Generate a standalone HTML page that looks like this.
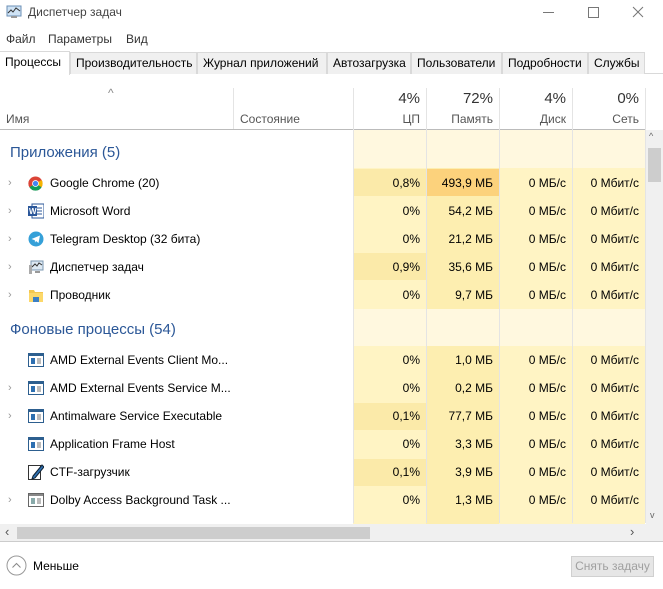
<!DOCTYPE html>
<html><head><meta charset="utf-8"><style>
*{margin:0;padding:0;box-sizing:border-box}
body{width:663px;height:589px;background:#fff;font-family:"Liberation Sans",sans-serif;font-size:12px;color:#000;position:relative;overflow:hidden}
.a{position:absolute;white-space:nowrap}
.tab{position:absolute;top:52px;height:22px;border:1px solid #d9d9d9;border-bottom:none;background:#f0f0f0;font-size:12px;line-height:20px;padding-left:5px}
.c{position:absolute;text-align:right;padding-right:6px;line-height:28px;height:28px}
.vl{position:absolute;top:88px;width:1px;height:435px;background:#e4e4e4}
.g{position:absolute;color:#2b5797;font-size:15px}
.ch{position:absolute;left:8px;color:#999;font-size:11px}
</style></head><body>
<svg class="a" style="left:6px;top:5px" width="16" height="14" viewBox="0 0 16 14"><rect x="1" y="1" width="14" height="10" fill="#cfe3f5" stroke="#6b8fb5"/><polyline points="2,8 5,5 7,7 10,3 14,6" fill="none" stroke="#333" stroke-width="1"/><rect x="5" y="11" width="6" height="2" fill="#999"/></svg>
<div class="a" style="left:28px;top:5px;color:#444;font-size:12px">Диспетчер задач</div>
<div class="a" style="left:543px;top:12px;width:11px;height:1px;background:#777"></div>
<div class="a" style="left:588px;top:7px;width:11px;height:11px;border:1px solid #777"></div>
<svg class="a" style="left:632px;top:6px" width="12" height="12"><path d="M1 1L11 11M11 1L1 11" stroke="#777" stroke-width="1"/></svg>
<div class="a" style="left:6px;top:32px;color:#333">Файл</div>
<div class="a" style="left:48px;top:32px;color:#333">Параметры</div>
<div class="a" style="left:126px;top:32px;color:#333">Вид</div>
<div class="a" style="left:0;top:73px;width:663px;height:1px;background:#d9d9d9"></div>
<div class="tab" style="left:70px;width:127px">Производительность</div>
<div class="tab" style="left:197px;width:130px">Журнал приложений</div>
<div class="tab" style="left:327px;width:84px">Автозагрузка</div>
<div class="tab" style="left:411px;width:91px">Пользователи</div>
<div class="tab" style="left:502px;width:86px">Подробности</div>
<div class="tab" style="left:588px;width:57px">Службы</div>
<div class="tab" style="left:0;width:70px;background:#fff;border-color:#d9d9d9;top:51px;height:24px;border-left:none">Процессы</div>
<div class="a" style="left:108px;top:86px;color:#888;font-size:12px">^</div>
<div class="a" style="left:6px;top:112px;color:#555">Имя</div>
<div class="a" style="left:240px;top:112px;color:#555">Состояние</div>
<div class="a" style="left:353px;width:67px;top:90px;text-align:right;font-size:15px;color:#333">4%</div>
<div class="a" style="left:353px;width:67px;top:112px;text-align:right;color:#555">ЦП</div>
<div class="a" style="left:426px;width:67px;top:90px;text-align:right;font-size:15px;color:#333">72%</div>
<div class="a" style="left:426px;width:67px;top:112px;text-align:right;color:#555">Память</div>
<div class="a" style="left:499px;width:67px;top:90px;text-align:right;font-size:15px;color:#333">4%</div>
<div class="a" style="left:499px;width:67px;top:112px;text-align:right;color:#555">Диск</div>
<div class="a" style="left:572px;width:67px;top:90px;text-align:right;font-size:15px;color:#333">0%</div>
<div class="a" style="left:572px;width:67px;top:112px;text-align:right;color:#555">Сеть</div>
<div class="a" style="left:233px;top:88px;width:1px;height:42px;background:#e4e4e4"></div>
<div class="a" style="left:0;top:129px;width:645px;height:1px;background:#bbb"></div>
<div class="a" style="left:353px;top:130px;width:292px;height:394px;background:#fff4c4"></div>
<div class="a" style="left:426px;top:130px;width:73px;height:394px;background:#fdeeb0"></div>
<div class="a" style="left:353px;top:130px;width:292px;height:38px;background:#fff8df"></div>
<div class="a" style="left:353px;top:309px;width:292px;height:37px;background:#fff8df"></div>
<div class="a" style="left:353px;top:169px;width:73px;height:27px;background:#fbeaa9"></div>
<div class="a" style="left:426px;top:169px;width:73px;height:27px;background:#fcd27c"></div>
<div class="a" style="left:353px;top:253px;width:73px;height:27px;background:#fbeaa9"></div>
<div class="a" style="left:353px;top:403px;width:73px;height:27px;background:#fbeaa9"></div>
<div class="a" style="left:353px;top:459px;width:73px;height:27px;background:#fbeaa9"></div>
<div class="vl" style="left:353px"></div>
<div class="vl" style="left:426px"></div>
<div class="vl" style="left:499px"></div>
<div class="vl" style="left:572px"></div>
<div class="vl" style="left:645px"></div>
<div class="g" style="left:10px;top:144px">Приложения (5)</div>
<div class="g" style="left:10px;top:321px">Фоновые процессы (54)</div>
<div style="position:absolute;left:0;top:169px;width:645px">
 <div class="a" style="top:0;height:28px;width:645px">
  <span class="ch" style="top:8px">›</span>
  <svg class="a" style="left:28px;top:7px" width="15" height="15" viewBox="0 0 16 16"><circle cx="8" cy="8" r="7.5" fill="#db4437"/><path d="M8 8 L14.5 11.8 A7.5 7.5 0 0 1 1.5 11.8Z" fill="#0f9d58"/><path d="M8 8 L1.5 11.8 A7.5 7.5 0 0 1 1.5 4.2 L8 .5Z" fill="#db4437"/><path d="M8 8 L14.5 4.2 A7.5 7.5 0 0 1 14.5 11.8Z" fill="#f4b400"/><circle cx="8" cy="8" r="3.6" fill="#fff"/><circle cx="8" cy="8" r="2.8" fill="#4285f4"/></svg>
  <span class="a" style="left:50px;top:7px">Google Chrome (20)</span>
  <span class="c" style="left:353px;width:73px;top:0">0,8%</span><span class="c" style="left:426px;width:73px;top:0">493,9 МБ</span><span class="c" style="left:499px;width:73px;top:0">0 МБ/с</span><span class="c" style="left:572px;width:73px;top:0">0 Мбит/с</span>
 </div>
 <div class="a" style="top:28px;height:28px;width:645px">
  <span class="ch" style="top:8px">›</span>
  <svg class="a" style="left:28px;top:6px" width="16" height="16"><rect x="4" y="1" width="12" height="14" fill="#fff" stroke="#2b579a"/><line x1="9" y1="5" x2="14" y2="5" stroke="#2b579a"/><line x1="9" y1="8" x2="14" y2="8" stroke="#2b579a"/><line x1="9" y1="11" x2="14" y2="11" stroke="#2b579a"/><rect x="0" y="3" width="9" height="10" fill="#2b579a"/><text x="1" y="11" font-size="8" fill="#fff" font-family="Liberation Sans" font-weight="bold">W</text></svg>
  <span class="a" style="left:50px;top:7px">Microsoft Word</span>
  <span class="c" style="left:353px;width:73px">0%</span><span class="c" style="left:426px;width:73px">54,2 МБ</span><span class="c" style="left:499px;width:73px">0 МБ/с</span><span class="c" style="left:572px;width:73px">0 Мбит/с</span>
 </div>
 <div class="a" style="top:56px;height:28px;width:645px">
  <span class="ch" style="top:8px">›</span>
  <svg class="a" style="left:28px;top:6px" width="16" height="16"><circle cx="8" cy="8" r="7.5" fill="#35a0d8"/><path d="M3.5 8 L12 4.5 L10.5 12 L8 10 L7 11.5 L6.8 9.2Z" fill="#fff"/></svg>
  <span class="a" style="left:50px;top:7px">Telegram Desktop (32 бита)</span>
  <span class="c" style="left:353px;width:73px">0%</span><span class="c" style="left:426px;width:73px">21,2 МБ</span><span class="c" style="left:499px;width:73px">0 МБ/с</span><span class="c" style="left:572px;width:73px">0 Мбит/с</span>
 </div>
 <div class="a" style="top:84px;height:28px;width:645px">
  <span class="ch" style="top:8px">›</span>
  <svg class="a" style="left:28px;top:6px" width="16" height="16"><rect x="3" y="2" width="12" height="9" fill="#dde9f3" stroke="#7b97b0"/><polyline points="4,8 7,5 9,7 11,4 14,6" fill="none" stroke="#333"/><rect x="1" y="6" width="3" height="9" fill="#aaa"/><rect x="7" y="12" width="5" height="2" fill="#999"/></svg>
  <span class="a" style="left:50px;top:7px">Диспетчер задач</span>
  <span class="c" style="left:353px;width:73px">0,9%</span><span class="c" style="left:426px;width:73px">35,6 МБ</span><span class="c" style="left:499px;width:73px">0 МБ/с</span><span class="c" style="left:572px;width:73px">0 Мбит/с</span>
 </div>
 <div class="a" style="top:112px;height:28px;width:645px">
  <span class="ch" style="top:8px">›</span>
  <svg class="a" style="left:28px;top:6px" width="16" height="16"><path d="M1 3h5l1 2h8v10H1z" fill="#f3c74f"/><rect x="1" y="6" width="14" height="9" fill="#fcd86a"/><rect x="5" y="10" width="6" height="5" fill="#3b7fc4"/></svg>
  <span class="a" style="left:50px;top:7px">Проводник</span>
  <span class="c" style="left:353px;width:73px">0%</span><span class="c" style="left:426px;width:73px">9,7 МБ</span><span class="c" style="left:499px;width:73px">0 МБ/с</span><span class="c" style="left:572px;width:73px">0 Мбит/с</span>
 </div>
</div>
<div style="position:absolute;left:0;top:346px;width:645px">
 <div class="a" style="top:0;height:28px;width:645px">
  <svg class="a" style="left:28px;top:7px" width="16" height="14"><rect x=".5" y=".5" width="15" height="13" fill="#fff" stroke="#2d5f8f"/><rect x="1" y="1" width="14" height="2" fill="#2d5f8f"/><rect x="3" y="5" width="4" height="6" fill="#2d6fb0"/><line x1="9" y1="6" x2="13" y2="6" stroke="#777"/><line x1="9" y1="8" x2="13" y2="8" stroke="#777"/><line x1="9" y1="10" x2="13" y2="10" stroke="#777"/></svg>
  <span class="a" style="left:50px;top:7px">AMD External Events Client Mo...</span>
  <span class="c" style="left:353px;width:73px">0%</span><span class="c" style="left:426px;width:73px">1,0 МБ</span><span class="c" style="left:499px;width:73px">0 МБ/с</span><span class="c" style="left:572px;width:73px">0 Мбит/с</span>
 </div>
 <div class="a" style="top:28px;height:28px;width:645px">
  <span class="ch" style="top:8px">›</span>
  <svg class="a" style="left:28px;top:7px" width="16" height="14"><rect x=".5" y=".5" width="15" height="13" fill="#fff" stroke="#2d5f8f"/><rect x="1" y="1" width="14" height="2" fill="#2d5f8f"/><rect x="3" y="5" width="4" height="6" fill="#2d6fb0"/><line x1="9" y1="6" x2="13" y2="6" stroke="#777"/><line x1="9" y1="8" x2="13" y2="8" stroke="#777"/><line x1="9" y1="10" x2="13" y2="10" stroke="#777"/></svg>
  <span class="a" style="left:50px;top:7px">AMD External Events Service M...</span>
  <span class="c" style="left:353px;width:73px">0%</span><span class="c" style="left:426px;width:73px">0,2 МБ</span><span class="c" style="left:499px;width:73px">0 МБ/с</span><span class="c" style="left:572px;width:73px">0 Мбит/с</span>
 </div>
 <div class="a" style="top:56px;height:28px;width:645px">
  <span class="ch" style="top:8px">›</span>
  <svg class="a" style="left:28px;top:7px" width="16" height="14"><rect x=".5" y=".5" width="15" height="13" fill="#fff" stroke="#2d5f8f"/><rect x="1" y="1" width="14" height="2" fill="#2d5f8f"/><rect x="3" y="5" width="4" height="6" fill="#2d6fb0"/><line x1="9" y1="6" x2="13" y2="6" stroke="#777"/><line x1="9" y1="8" x2="13" y2="8" stroke="#777"/><line x1="9" y1="10" x2="13" y2="10" stroke="#777"/></svg>
  <span class="a" style="left:50px;top:7px">Antimalware Service Executable</span>
  <span class="c" style="left:353px;width:73px">0,1%</span><span class="c" style="left:426px;width:73px">77,7 МБ</span><span class="c" style="left:499px;width:73px">0 МБ/с</span><span class="c" style="left:572px;width:73px">0 Мбит/с</span>
 </div>
 <div class="a" style="top:84px;height:28px;width:645px">
  <svg class="a" style="left:28px;top:7px" width="16" height="14"><rect x=".5" y=".5" width="15" height="13" fill="#fff" stroke="#2d5f8f"/><rect x="1" y="1" width="14" height="2" fill="#2d5f8f"/><rect x="3" y="5" width="4" height="6" fill="#2d6fb0"/><line x1="9" y1="6" x2="13" y2="6" stroke="#777"/><line x1="9" y1="8" x2="13" y2="8" stroke="#777"/><line x1="9" y1="10" x2="13" y2="10" stroke="#777"/></svg>
  <span class="a" style="left:50px;top:7px">Application Frame Host</span>
  <span class="c" style="left:353px;width:73px">0%</span><span class="c" style="left:426px;width:73px">3,3 МБ</span><span class="c" style="left:499px;width:73px">0 МБ/с</span><span class="c" style="left:572px;width:73px">0 Мбит/с</span>
 </div>
 <div class="a" style="top:112px;height:28px;width:645px">
  <svg class="a" style="left:28px;top:5px" width="16" height="17"><rect x=".5" y="2.5" width="12" height="14" fill="#fff" stroke="#333"/><path d="M5 13 L14 2 L16 4 L7 15 L4 16Z" fill="#2d6fb0" stroke="#123"/></svg>
  <span class="a" style="left:50px;top:7px">CTF-загрузчик</span>
  <span class="c" style="left:353px;width:73px">0,1%</span><span class="c" style="left:426px;width:73px">3,9 МБ</span><span class="c" style="left:499px;width:73px">0 МБ/с</span><span class="c" style="left:572px;width:73px">0 Мбит/с</span>
 </div>
 <div class="a" style="top:140px;height:28px;width:645px">
  <span class="ch" style="top:8px">›</span>
  <svg class="a" style="left:28px;top:7px" width="16" height="14"><rect x=".5" y=".5" width="15" height="13" fill="#fff" stroke="#666"/><rect x="1" y="1" width="14" height="2" fill="#888"/><rect x="3" y="5" width="4" height="6" fill="#8aa"/><line x1="9" y1="6" x2="13" y2="6" stroke="#777"/><line x1="9" y1="8" x2="13" y2="8" stroke="#777"/><line x1="9" y1="10" x2="13" y2="10" stroke="#777"/></svg>
  <span class="a" style="left:50px;top:7px">Dolby Access Background Task ...</span>
  <span class="c" style="left:353px;width:73px">0%</span><span class="c" style="left:426px;width:73px">1,3 МБ</span><span class="c" style="left:499px;width:73px">0 МБ/с</span><span class="c" style="left:572px;width:73px">0 Мбит/с</span>
 </div>
</div>
<div class="a" style="left:646px;top:130px;width:17px;height:394px;background:#f0f0f0"></div>
<div class="a" style="left:649px;top:131px;font-size:9px;color:#666">^</div>
<div class="a" style="left:648px;top:148px;width:13px;height:34px;background:#cdcdcd"></div>
<div class="a" style="left:650px;top:510px;font-size:9px;color:#666">v</div>
<div class="a" style="left:0;top:524px;width:663px;height:17px;background:#f0f0f0"></div>
<div class="a" style="left:17px;top:527px;width:353px;height:12px;background:#cdcdcd"></div>
<div class="a" style="left:5px;top:524px;color:#555;font-size:13px">‹</div>
<div class="a" style="left:630px;top:524px;color:#555;font-size:13px">›</div>
<div class="a" style="left:0;top:541px;width:663px;height:1px;background:#ccc"></div>
<svg class="a" style="left:6px;top:555px" width="21" height="21"><circle cx="10.5" cy="10.5" r="9.5" fill="none" stroke="#999"/><path d="M6.5 12.5L10.5 8.5L14.5 12.5" fill="none" stroke="#888"/></svg>
<div class="a" style="left:33px;top:559px">Меньше</div>
<div class="a" style="left:571px;top:556px;width:83px;height:21px;background:#e6e6e6;border:1px solid #d0d0d0;color:#a0a0a0;text-align:center;line-height:19px">Снять задачу</div>
</body></html>
